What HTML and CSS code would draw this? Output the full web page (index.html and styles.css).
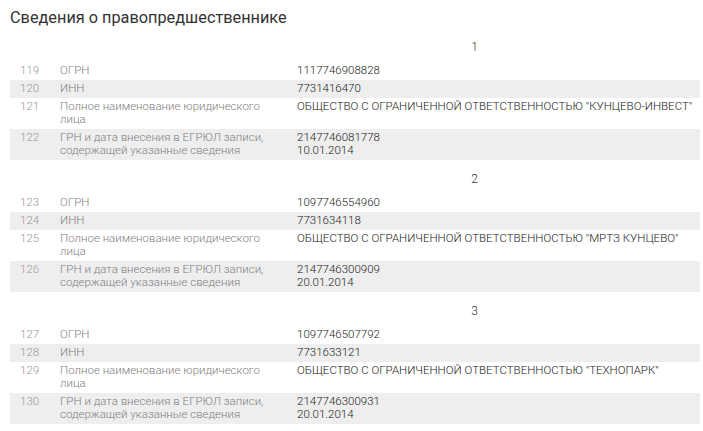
FILE: index.html
```html
<!DOCTYPE html>
<html lang="ru">
<head>
    <meta charset="UTF-8">
    <title>Сведения о правопредшественнике</title>
    <link rel="stylesheet" href="styles.css">
</head>
<body>
    <h2 class="title">Сведения о правопредшественнике</h2>

    <table class="info">
        <!-- 1 -->
        <tr class="group"><td></td><td></td><td>1</td></tr>
        <tr><td class="num">119</td><td class="label">ОГРН</td><td class="value">1117746908828</td></tr>
        <tr class="odd"><td class="num">120</td><td class="label">ИНН</td><td class="value">7731416470</td></tr>
        <tr><td class="num">121</td><td class="label">Полное наименование юридического<br>лица</td><td class="value">ОБЩЕСТВО С ОГРАНИЧЕННОЙ ОТВЕТСТВЕННОСТЬЮ "КУНЦЕВО-ИНВЕСТ"</td></tr>
        <tr class="odd"><td class="num">122</td><td class="label">ГРН и дата внесения в ЕГРЮЛ записи,<br>содержащей указанные сведения</td><td class="value">2147746081778<br>10.01.2014</td></tr>

        <!-- 2 -->
        <tr class="group"><td></td><td></td><td>2</td></tr>
        <tr><td class="num">123</td><td class="label">ОГРН</td><td class="value">1097746554960</td></tr>
        <tr class="odd"><td class="num">124</td><td class="label">ИНН</td><td class="value">7731634118</td></tr>
        <tr><td class="num">125</td><td class="label">Полное наименование юридического<br>лица</td><td class="value">ОБЩЕСТВО С ОГРАНИЧЕННОЙ ОТВЕТСТВЕННОСТЬЮ "МРТЗ КУНЦЕВО"</td></tr>
        <tr class="odd"><td class="num">126</td><td class="label">ГРН и дата внесения в ЕГРЮЛ записи,<br>содержащей указанные сведения</td><td class="value">2147746300909<br>20.01.2014</td></tr>

        <!-- 3 -->
        <tr class="group"><td></td><td></td><td>3</td></tr>
        <tr><td class="num">127</td><td class="label">ОГРН</td><td class="value">1097746507792</td></tr>
        <tr class="odd"><td class="num">128</td><td class="label">ИНН</td><td class="value">7731633121</td></tr>
        <tr><td class="num">129</td><td class="label">Полное наименование юридического<br>лица</td><td class="value">ОБЩЕСТВО С ОГРАНИЧЕННОЙ ОТВЕТСТВЕННОСТЬЮ "ТЕХНОПАРК"</td></tr>
        <tr class="odd"><td class="num">130</td><td class="label">ГРН и дата внесения в ЕГРЮЛ записи,<br>содержащей указанные сведения</td><td class="value">2147746300931<br>20.01.2014</td></tr>
    </table>
</body>
</html>
```

FILE: styles.css
```css
body {
    font-family: Roboto, "Liberation Sans", sans-serif;
    margin: 0;
    padding: 0 3px 0 10px;
    background-color: #fff;
    color: #333;
}
.title {
    font-size: 16.3px;
    font-weight: 400;
    color: #333;
    margin: 0;
    padding-top: 8px;
    line-height: 20px;
}
.info {
    width: 100%;
    border-collapse: collapse;
    font-size: 11.5px;
    line-height: 13px;
}
.info td {
    padding: 2px 0 3px;
    vertical-align: top;
}
.info .group td {
    padding: 13px 48px 8px 0;
    vertical-align: middle;
    text-align: center;
    font-size: 12px;
    font-weight: 300;
    color: #333;
}
.num {
    width: 40px;
    padding-left: 10px !important;
    color: #999;
    font-weight: 300;
}
.label {
    width: 237px;
    color: #808080;
    font-weight: 300;
}
.value {
    color: #222;
    font-weight: 300;
}
.odd {
    background-color: #eee;
}
```
